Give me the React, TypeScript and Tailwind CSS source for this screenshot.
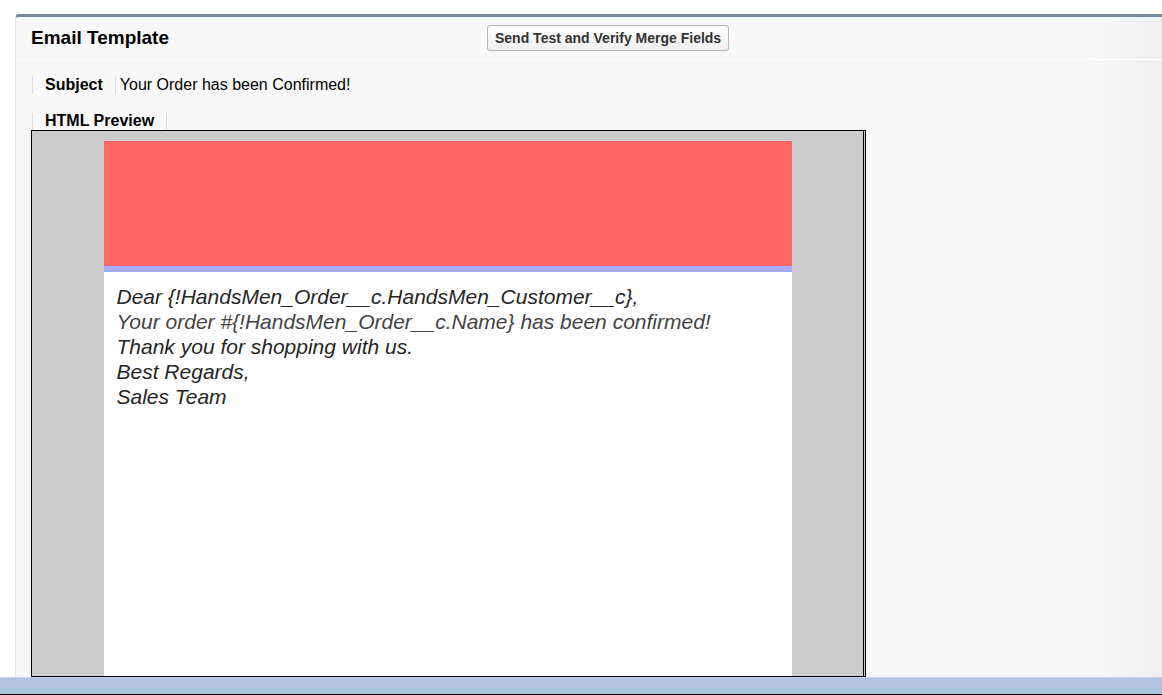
import React from 'react';

const lines = [
  { text: 'Dear {!HandsMen_Order__c.HandsMen_Customer__c},', tone: 'text-[#262626]' },
  { text: 'Your order #{!HandsMen_Order__c.Name} has been confirmed!', tone: 'text-[#444444]' },
  { text: 'Thank you for shopping with us.', tone: 'text-[#262626]' },
  { text: 'Best Regards,', tone: 'text-[#262626]' },
  { text: 'Sales Team', tone: 'text-[#262626]' },
];

function Preview() {
  return (
    <div className="ml-[15px] w-[835px] h-[560px] border border-black bg-[#cccccc] overflow-hidden">
      <div className="h-full mr-[1px] border-r border-black flex justify-center pt-[10px]">
        <div className="w-[688px] bg-white">
          <div className="h-[125px] bg-[#ff6666]" />
          <div className="h-[6px] bg-[#aaaaff]" />
          <div className="pl-[13px] pt-[12px] italic text-[21px] leading-[25px]">
            {lines.map((l) => (
              <div key={l.text} className={l.tone}>
                {l.text}
              </div>
            ))}
          </div>
        </div>
      </div>
    </div>
  );
}

export default function App() {
  return (
    <div className="h-[695px] w-[1162px] bg-white flex flex-col overflow-hidden font-['Liberation_Sans',Arial,sans-serif] text-black">
      <div className="flex-1 min-h-0 pt-[14px] pl-[15px]">
        <div className="h-full border-t-[3px] border-t-[#7b86a1] border-l border-l-[#e6e6e6] rounded-tl-[4px] bg-[linear-gradient(to_right,#f8f8f8_93%,#efefef)] flex flex-col">
          {/* header */}
          <div className="h-[44px] flex items-center border-b border-white pl-[15px]">
            <h2 className="w-[456px] text-[19px] font-bold leading-none -mt-[1px]">Email Template</h2>
            <button className="h-[26px] px-[7px] rounded-[3px] border border-[#b5b5b5] bg-[linear-gradient(#ffffff,#f0f0f0)] text-[14px] font-bold text-[#333333] leading-none">
              Send Test and Verify Merge Fields
            </button>
          </div>

          {/* subject */}
          <div className="mt-[16px] ml-[16px] flex items-center h-[18px] text-[16px] leading-none">
            <div className="h-full border-l border-[#dddddd] pl-[12px] pr-[12px] flex items-center font-bold">
              Subject
            </div>
            <div className="h-full border-l border-[#dddddd] pl-[4px] flex items-center">
              Your Order has been Confirmed!
            </div>
          </div>

          {/* html preview label */}
          <div className="mt-[19px] ml-[16px] flex h-[18px] text-[16px] leading-none">
            <div className="h-full border-l border-r border-[#dddddd] pl-[12px] pr-[12px] flex items-center font-bold">
              HTML Preview
            </div>
          </div>

          <Preview />
        </div>
      </div>
      <div className="h-[18px] bg-[#b0c4de] border-t border-t-[#c8d5e7] border-b border-b-black" />
    </div>
  );
}
